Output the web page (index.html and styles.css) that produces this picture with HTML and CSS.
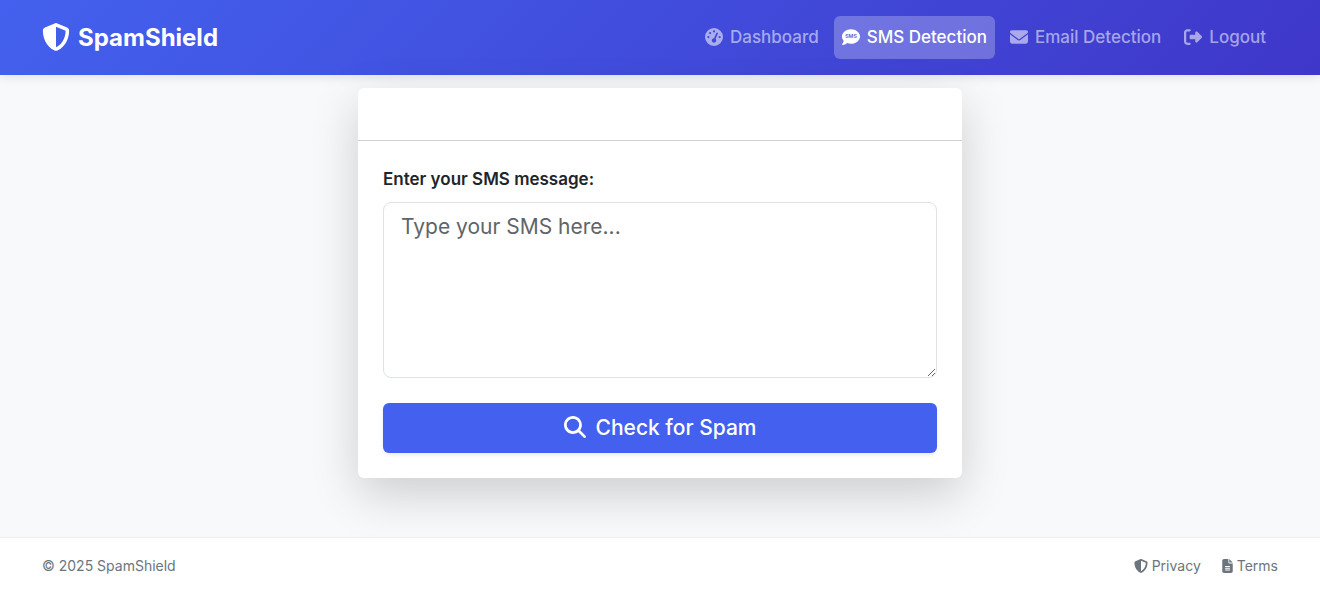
FILE: index.html
```html
<!DOCTYPE html>
<html lang="en">
<head>
<meta charset="utf-8">
<meta name="viewport" content="width=device-width, initial-scale=1">
<title>SpamShield - SMS Detection</title>
<link rel="stylesheet" href="styles.css">
</head>
<body>
<header class="navbar">
  <a class="brand" href="#">
    <svg class="icon" viewBox="0 0 512 512" aria-hidden="true"><path d="M256 0c4.600 0 9.200 1 13.400 2.900L457.700 82.800c22 9.300 38.400 31 38.300 57.200c-.5 99.200-41.300 280.700-213.600 363.200c-16.700 8-36.100 8-52.800 0C57.300 420.700 16.500 239.200 16 140c-.1-26.200 16.300-47.900 38.300-57.200L242.700 2.900C246.800 1 251.400 0 256 0zm0 66.800V444.800C394 378 431.100 230.100 432 141.400L256 66.800z"/></svg>
    SpamShield
  </a>
  <nav class="nav">
    <a class="nav-link" href="#">
      <svg class="icon" viewBox="0 0 512 512" aria-hidden="true"><path d="M0 256a256 256 0 1 1 512 0A256 256 0 1 1 0 256zM288 96a32 32 0 1 0 -64 0 32 32 0 1 0 64 0zM256 416c35.300 0 64-28.700 64-64c0-17.400-6.900-33.100-18.100-44.600L366 161.700c5.300-12.100-.2-26.300-12.300-31.600s-26.300 .2-31.600 12.300L257.900 288c-.6 0-1.300 0-1.900 0c-35.300 0-64 28.700-64 64s28.700 64 64 64zM176 144a32 32 0 1 0 -64 0 32 32 0 1 0 64 0zM96 288a32 32 0 1 0 0-64 32 32 0 1 0 0 64zm352-32a32 32 0 1 0 -64 0 32 32 0 1 0 64 0z"/></svg>
      Dashboard
    </a>
    <a class="nav-link active" href="#" aria-current="page">
      <svg class="icon" viewBox="0 0 512 512" aria-hidden="true"><path d="M256 448c141.400 0 256-93.100 256-208S397.400 32 256 32S0 125.100 0 240c0 45.100 17.700 86.800 47.700 120.900c-1.900 24.500-11.400 46.300-21.400 62.900c-5.500 9.200-11.100 16.600-15.200 21.600c-2.100 2.500-3.700 4.400-4.900 5.700c-.6 .6-1 1.100-1.300 1.400l-.3 .3c-4.600 4.600-5.900 11.400-3.400 17.400c2.500 6 8.300 9.900 14.800 9.900c28.700 0 57.600-8.900 81.600-19.300c22.900-10 42.400-21.900 54.300-30.600c31.800 11.500 67 17.900 104.100 17.900z"/><text class="bubble-text" x="256" y="292" text-anchor="middle">SMS</text></svg>
      SMS Detection
    </a>
    <a class="nav-link" href="#">
      <svg class="icon" viewBox="0 0 512 512" aria-hidden="true"><path d="M48 64C21.500 64 0 85.500 0 112c0 15.100 7.100 29.300 19.200 38.400L236.800 313.600c11.400 8.500 27 8.500 38.400 0L492.800 150.400c12.100-9.100 19.200-23.300 19.200-38.400c0-26.500-21.500-48-48-48H48zM0 176V384c0 35.300 28.700 64 64 64H448c35.300 0 64-28.700 64-64V176L294.400 339.200c-22.800 17.100-54 17.100-76.800 0L0 176z"/></svg>
      Email Detection
    </a>
    <a class="nav-link" href="#">
      <svg class="icon" viewBox="0 0 512 512" aria-hidden="true"><path d="M377.900 105.900L500.700 228.700c7.200 7.200 11.300 17.100 11.300 27.300s-4.100 20.100-11.300 27.300L377.900 406.100c-6.400 6.400-15 9.900-24 9.900c-18.700 0-33.900-15.200-33.900-33.900l0-62.100-128 0c-17.700 0-32-14.300-32-32l0-64c0-17.700 14.300-32 32-32l128 0 0-62.100c0-18.700 15.200-33.900 33.900-33.900c9 0 17.600 3.600 24 9.900zM160 96L96 96c-17.700 0-32 14.300-32 32l0 256c0 17.700 14.300 32 32 32l64 0c17.700 0 32 14.300 32 32s-14.300 32-32 32l-64 0c-53 0-96-43-96-96L0 128C0 75 43 32 96 32l64 0c17.700 0 32 14.300 32 32s-14.300 32-32 32z"/></svg>
      Logout
    </a>
  </nav>
</header>
<main class="main">
  <section class="card">
    <div class="card-header"></div>
    <form class="card-body">
      <label class="label" for="message">Enter your SMS message:</label>
      <textarea class="message" id="message" placeholder="Type your SMS here..."></textarea>
      <button class="submit" type="submit">
        <svg class="icon" viewBox="0 0 512 512" aria-hidden="true"><path d="M416 208c0 45.900-14.900 88.300-40 122.700L502.600 457.400c12.500 12.500 12.500 32.800 0 45.300s-32.800 12.500-45.300 0L330.700 376c-34.400 25.200-76.800 40-122.700 40C93.100 416 0 322.900 0 208S93.100 0 208 0S416 93.100 416 208zM208 352a144 144 0 1 0 0-288 144 144 0 1 0 0 288z"/></svg>
        Check for Spam
      </button>
    </form>
  </section>
</main>
<footer class="footer">
  <span>© 2025 SpamShield</span>
  <div class="footer-links">
    <a class="footer-link" href="#">
      <svg class="icon" viewBox="0 0 512 512" aria-hidden="true"><path d="M256 0c4.600 0 9.200 1 13.400 2.900L457.700 82.800c22 9.300 38.400 31 38.300 57.200c-.5 99.200-41.300 280.700-213.600 363.200c-16.700 8-36.100 8-52.800 0C57.300 420.700 16.500 239.200 16 140c-.1-26.200 16.300-47.900 38.300-57.200L242.700 2.900C246.800 1 251.400 0 256 0zm0 66.800V444.800C394 378 431.100 230.100 432 141.400L256 66.800z"/></svg>
      Privacy
    </a>
    <a class="footer-link" href="#">
      <svg class="icon icon-file" viewBox="0 0 384 512" aria-hidden="true"><path d="M64 0C28.700 0 0 28.700 0 64V448c0 35.300 28.700 64 64 64H320c35.300 0 64-28.700 64-64V160H256c-17.700 0-32-14.300-32-32V0H64zM256 0V128H384L256 0zM112 256H272c8.800 0 16 7.200 16 16s-7.200 16-16 16H112c-8.800 0-16-7.200-16-16s7.200-16 16-16zm0 64H272c8.800 0 16 7.200 16 16s-7.200 16-16 16H112c-8.800 0-16-7.200-16-16s7.200-16 16-16zm0 64H272c8.800 0 16 7.200 16 16s-7.200 16-16 16H112c-8.800 0-16-7.200-16-16s7.200-16 16-16z"/></svg>
      Terms
    </a>
  </div>
</footer>
</body>
</html>
```

FILE: styles.css
```css
*, *::before, *::after { box-sizing: border-box; }

body {
  display: flex;
  flex-direction: column;
  min-height: 100vh;
  margin: 0;
  background: #f8f9fb;
  color: #212529;
  font: 400 17px/27px Inter, "Liberation Sans", sans-serif;
}

a { color: inherit; text-decoration: none; }

.icon {
  flex: none;
  width: 1em;
  height: 1em;
  fill: currentColor;
}

.brand .icon,
.nav-link .icon,
.submit .icon { margin-bottom: 2px; }

.navbar {
  display: flex;
  align-items: center;
  justify-content: space-between;
  padding: 16px 42px;
  background: linear-gradient(135deg, #4361ee, #3f37c9);
  box-shadow: 0 2px 10px rgba(0, 0, 0, 0.1);
}

.brand {
  display: flex;
  align-items: center;
  gap: 8px;
  color: #fff;
  font-size: 24px;
  font-weight: 700;
}

.brand .icon { font-size: 28px; }

.nav {
  display: flex;
  gap: 7px;
  padding-right: 4px;
}

.nav-link {
  display: flex;
  align-items: center;
  gap: 7px;
  padding: 8px;
  border-radius: 6px;
  color: rgba(255, 255, 255, 0.55);
  font-weight: 500;
}

.nav-link .icon { font-size: 18px; }

.nav-link.active {
  background: rgba(255, 255, 255, 0.25);
  color: #fff;
}

.bubble-text {
  fill: #5b5adb;
  font-size: 150px;
  font-weight: 600;
}

.main {
  flex: 1;
  padding: 13px 16px 59px;
}

.card {
  max-width: 604px;
  margin: 0 auto;
  border-radius: 6px;
  background: #fff;
  box-shadow: 0 16px 48px rgba(0, 0, 0, 0.175);
}

.card-header {
  height: 53px;
  border-bottom: 1px solid #d0d1d2;
}

.card-body {
  display: flex;
  flex-direction: column;
  padding: 25px;
}

.label {
  margin-bottom: 9px;
  font-weight: 600;
}

.message {
  height: 176px;
  padding: 8px 17px;
  border: 1px solid #dee2e6;
  border-radius: 8px;
  background: #fff;
  color: #212529;
  font: 400 21px/32px Inter, "Liberation Sans", sans-serif;
  resize: vertical;
}

.message::placeholder { color: #5f6469; }

.submit {
  display: flex;
  align-items: center;
  justify-content: center;
  gap: 10px;
  height: 50px;
  margin-top: 25px;
  border: 0;
  border-radius: 6px;
  background: #4361ee;
  box-shadow: 0 2px 4px rgba(0, 0, 0, 0.08);
  color: #fff;
  font: 500 21px/32px Inter, "Liberation Sans", sans-serif;
}

.submit .icon { font-size: 22px; }

.footer {
  display: flex;
  align-items: center;
  justify-content: space-between;
  position: relative;
  padding: 16px 42px;
  border-top: 1px solid #eeeff0;
  background: #fff;
  color: #6c757d;
  font-size: 14px;
  line-height: 23px;
}

.footer-links { display: flex; gap: 21px; }

.footer-link {
  display: flex;
  align-items: center;
  gap: 4px;
}

.icon-file { width: 11px; }
```
